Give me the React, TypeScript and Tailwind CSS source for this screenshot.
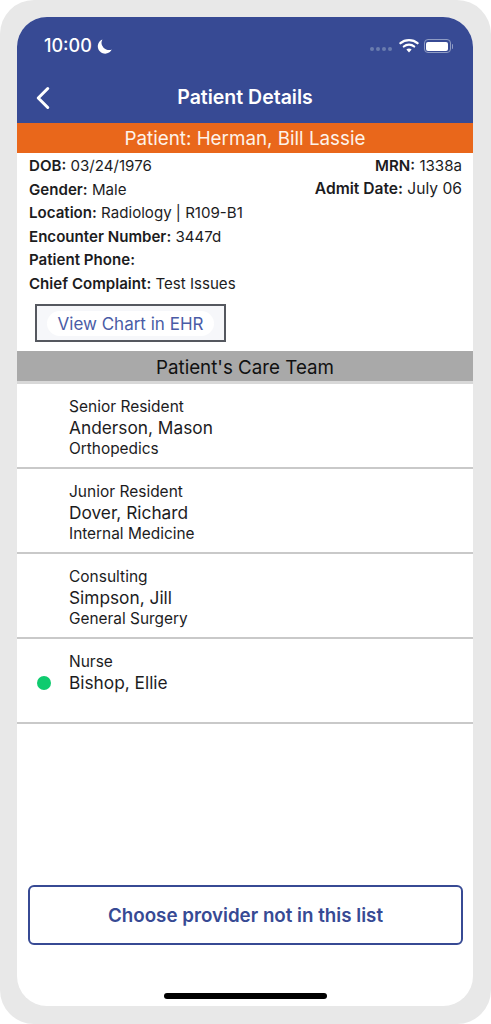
import { ChevronLeft } from "lucide-react";

const team = [
  { role: "Senior Resident", name: "Anderson, Mason", dept: "Orthopedics" },
  { role: "Junior Resident", name: "Dover, Richard", dept: "Internal Medicine" },
  { role: "Consulting", name: "Simpson, Jill", dept: "General Surgery" },
  { role: "Nurse", name: "Bishop, Ellie", online: true },
];

function Field({ label, value }: { label: string; value?: string }) {
  return (
    <p className="h-[23.5px] leading-[23.5px] whitespace-nowrap">
      <span className="font-semibold">{label}:</span>
      {value ? ` ${value}` : ""}
    </p>
  );
}

function StatusIcons() {
  return (
    <div className="flex items-center">
      <div className="mr-[7px] mt-[5px] flex gap-[2px]">
        <span className="h-[4px] w-[4px] rounded-full bg-[#6a7cae]" />
        <span className="h-[4px] w-[4px] rounded-full bg-[#6a7cae]" />
        <span className="h-[4px] w-[4px] rounded-full bg-[#6a7cae]" />
        <span className="h-[4px] w-[4px] rounded-full bg-[#6a7cae]" />
      </div>
      <svg width="20" height="15" viewBox="0 0 20 15" fill="none" className="mb-[1px]">
        <path d="M1.5 5.2C6 1 14 1 18.5 5.2" stroke="white" strokeWidth="2.3" strokeLinecap="round" />
        <path d="M4.8 8.5C7.6 6 12.4 6 15.2 8.5" stroke="white" strokeWidth="2.2" strokeLinecap="round" />
        <path d="M10 14.5L7.4 11.5C8.8 10.3 11.2 10.3 12.6 11.5Z" fill="white" />
      </svg>
      <div className="ml-[5px] flex h-[14px] w-[27px] items-center rounded-[4px] border border-[#8f9cc4] p-[1.5px]">
        <div className="h-full w-full rounded-[2px] bg-white" />
      </div>
      <span className="ml-[1px] h-[5px] w-[1.5px] rounded-r-sm bg-[#8f9cc4]" />
    </div>
  );
}

export default function App() {
  return (
    <div className="h-[1024px] w-[491px] bg-white font-['Inter',sans-serif] text-[#1c1c1e]">
      <div className="h-full rounded-[34px] bg-[#e8e8e8] pt-[17px] pr-[18px] pb-[18px] pl-[17px]">
        <div className="flex h-full flex-col overflow-hidden rounded-[30px] bg-white">
          <header className="h-[106px] shrink-0 bg-[#374a94] text-white">
            <div className="flex items-center justify-between pt-[18px] pr-[20px] pl-[27px]">
              <div className="flex items-center gap-[5px] text-[18px] leading-[22px] font-medium">
                10:00
                <svg width="15" height="15" viewBox="0 0 15 15">
                  <path d="M5.4 0.4A7.4 7.4 0 1 0 14.8 10.6A7 7 0 0 1 9.2 10.4A7 7 0 0 1 5.4 0.4Z" fill="white" />
                </svg>
              </div>
              <StatusIcons />
            </div>
            <div className="relative mt-[26px] flex h-[30px] items-center justify-center text-[19.5px] font-semibold">
              <ChevronLeft className="absolute top-[-4px] left-[7px]" size={38} strokeWidth={1.9} />
              Patient Details
            </div>
          </header>

          <div className="h-[30px] shrink-0 bg-[#e9671b] text-center text-[18.8px] leading-[32px] text-[#fdf3ea]">
            Patient: Herman, Bill Lassie
          </div>

          <section className="relative h-[198px] shrink-0 pt-[1px] pl-[12px] text-[15.1px]">
            <Field label="DOB" value="03/24/1976" />
            <Field label="Gender" value="Male" />
            <Field label="Location" value="Radiology | R109-B1" />
            <Field label="Encounter Number" value="3447d" />
            <Field label="Patient Phone" />
            <Field label="Chief Complaint" value="Test Issues" />
            <div className="absolute top-[1px] right-[11px] text-right">
              <Field label="MRN" value="1338a" />
              <p className="-mt-[1px] text-[15.6px] leading-[23.5px] whitespace-nowrap">
                <span className="font-semibold">Admit Date:</span> July 06
              </p>
            </div>
            <div className="mt-[9px] ml-[6px] flex h-[38px] w-[191px] items-center justify-center border-2 border-[#55585f] bg-[#f6f7fa]">
              <span className="rounded-full bg-white px-[11px] pt-[2px] text-[17px] leading-[23px] text-[#4a5ca6]">
                View Chart in EHR
              </span>
            </div>
          </section>

          <div className="h-[33px] shrink-0 border-b-[3px] border-[#d8d8d8] bg-[#a9a9a9] text-center text-[18.75px] leading-[34px] text-[#111]">
            Patient's Care Team
          </div>

          <ul className="shrink-0">
            {team.map((m) => (
              <li key={m.name} className="flex h-[85px] border-b-2 border-[#c9c9c9] pt-[14px]">
                <div className="flex w-[52px] shrink-0 justify-center pt-[23px] pl-[1px]">
                  {m.online && <span className="h-[14px] w-[14px] rounded-full bg-[#0fcb6f]" />}
                </div>
                <div>
                  <p className="text-[15.5px] leading-[17px]">{m.role}</p>
                  <p className="text-[17.3px] leading-[25px]">{m.name}</p>
                  {m.dept && <p className="text-[15.4px] leading-[18px]">{m.dept}</p>}
                </div>
              </li>
            ))}
          </ul>

          <div className="mt-[161px] flex justify-center pl-[1px]">
            <button className="h-[60px] w-[435px] rounded-[6px] border-2 border-[#374a94] pt-[2px] text-[18.75px] font-semibold text-[#374a94]">
              Choose provider not in this list
            </button>
          </div>

          <div className="mt-[48px] flex justify-center pl-[1px]">
            <span className="h-[6px] w-[163px] rounded-full bg-black" />
          </div>
        </div>
      </div>
    </div>
  );
}
